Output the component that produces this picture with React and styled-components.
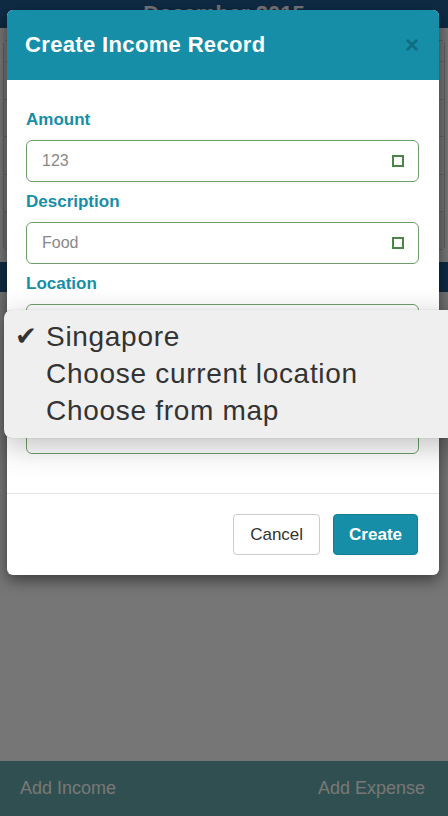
import React from 'react';
import styled, { createGlobalStyle } from 'styled-components';

const GlobalStyle = createGlobalStyle`
  html, body {
    margin: 0;
    padding: 0;
    font-family: "Liberation Sans", Arial, sans-serif;
  }
  * { box-sizing: border-box; }
`;

const Page = styled.div`
  position: relative;
  width: 448px;
  height: 816px;
  overflow: hidden;
  background: #ececec;
  display: flex;
  flex-direction: column;
`;

const TopBar = styled.div`
  height: 28px;
  background: #1f5688;
  color: #eee;
  font-weight: bold;
  font-size: 22px;
  text-align: center;
  line-height: 28px;
  flex-shrink: 0;
`;

const Calendar = styled.div`
  margin: 12px 3px 0;
  border: 1px solid #bbb;
  border-radius: 4px;
  display: flex;
  flex-direction: column;
`;

const CalRow = styled.div`
  height: 37.5px;
  border-top: 1px solid #ccc;
  background: ${p => (p.$shade ? '#e0e0e0' : '#ececec')};
  &:first-child { border-top: none; height: 20px; }
`;

const Band = styled.div`
  height: 30px;
  margin-top: 12px;
  background: #1f5688;
  flex-shrink: 0;
`;

const Filler = styled.div`
  flex: 1;
`;

const BottomBar = styled.div`
  height: 55px;
  background: #5f9ea0;
  display: flex;
  justify-content: space-between;
  align-items: center;
  padding: 0 23px 0 20px;
  color: #eee;
  font-size: 18px;
  flex-shrink: 0;
`;

const Backdrop = styled.div`
  position: absolute;
  inset: 0;
  background: rgba(0, 0, 0, 0.5);
`;

const Modal = styled.div`
  position: absolute;
  top: 10px;
  left: 7px;
  width: 432px;
  background: #fff;
  border-radius: 6px;
  box-shadow: 0 5px 15px rgba(0, 0, 0, 0.5);
`;

const Header = styled.div`
  height: 70px;
  background: #168ea7;
  border-radius: 6px 6px 0 0;
  display: flex;
  align-items: center;
  justify-content: space-between;
  padding: 0 20px 0 18px;
`;

const Title = styled.h2`
  margin: 0;
  color: #fff;
  font-size: 22px;
  letter-spacing: 0.35px;
  font-weight: bold;
`;

const Close = styled.span`
  color: #0f6c80;
  font-size: 24px;
  font-weight: bold;
  line-height: 1;
`;

const Body = styled.div`
  padding: 30px 20px 39px 19px;
  display: flex;
  flex-direction: column;
`;

const Label = styled.label`
  display: block;
  font-size: 17px;
  line-height: 20px;
  font-weight: bold;
  color: #168ea7;
  margin: ${p => (p.$first ? '0' : '10px')} 0 10px 0;
`;

const Field = styled.div`
  height: ${p => p.$height || 42}px;
  border: 1.5px solid #6e9e6a;
  border-radius: 6px;
  display: flex;
  align-items: ${p => (p.$height ? 'flex-start' : 'center')};
  justify-content: space-between;
  padding: 0 14px 0 15px;
  font-size: 16px;
  color: #888;
`;

const FieldIcon = styled.span`
  width: 12px;
  height: 12px;
  border: 2px solid #4d8549;
`;

const Footer = styled.div`
  border-top: 1px solid #e5e5e5;
  padding: 20px 21px 20px;
  display: flex;
  justify-content: flex-end;
  gap: 13px;
`;

const Button = styled.button`
  height: 41px;
  padding: 0 ${p => (p.$primary ? 15 : 16)}px;
  border-radius: 4px;
  font-family: inherit;
  font-size: 17px;
  border: 1px solid ${p => (p.$primary ? '#137f95' : '#ccc')};
  background: ${p => (p.$primary ? '#168ea7' : '#fff')};
  color: ${p => (p.$primary ? '#fff' : '#333')};
  font-weight: ${p => (p.$primary ? 'bold' : 'normal')};
`;

const Menu = styled.ul`
  position: absolute;
  top: 310px;
  left: 4px;
  width: 470px;
  margin: 0;
  padding: 8px 0 9px;
  list-style: none;
  background: #efefef;
  border-radius: 8px;
  box-shadow: 0 8px 30px rgba(0, 0, 0, 0.25), 0 0 1px rgba(0, 0, 0, 0.3);
`;

const MenuItem = styled.li`
  height: 37px;
  line-height: 37px;
  display: flex;
  font-size: 28px;
  letter-spacing: 0.7px;
  color: #333;
`;

const Check = styled.span`
  width: 42px;
  padding-left: 11px;
  font-family: "DejaVu Sans", sans-serif;
  font-size: 26px;
  letter-spacing: 0;
`;

const options = ['Singapore', 'Choose current location', 'Choose from map'];

export default function App() {
  return (
    <>
      <GlobalStyle />
      <Page>
        <TopBar>December 2015</TopBar>
        <Calendar>
          {[0, 1, 2, 3, 4, 5].map(i => (
            <CalRow key={i} $shade={i === 5} />
          ))}
        </Calendar>
        <Band />
        <Filler />
        <BottomBar>
          <span>Add Income</span>
          <span>Add Expense</span>
        </BottomBar>

        <Backdrop />

        <Modal>
          <Header>
            <Title>Create Income Record</Title>
            <Close>×</Close>
          </Header>
          <Body>
            <Label $first>Amount</Label>
            <Field>
              123
              <FieldIcon />
            </Field>
            <Label>Description</Label>
            <Field>
              Food
              <FieldIcon />
            </Field>
            <Label>Location</Label>
            <Field $height={150} />
          </Body>
          <Footer>
            <Button>Cancel</Button>
            <Button $primary>Create</Button>
          </Footer>
        </Modal>

        <Menu>
          {options.map((o, i) => (
            <MenuItem key={o}>
              <Check>{i === 0 ? '✔' : ''}</Check>
              {o}
            </MenuItem>
          ))}
        </Menu>
      </Page>
    </>
  );
}
